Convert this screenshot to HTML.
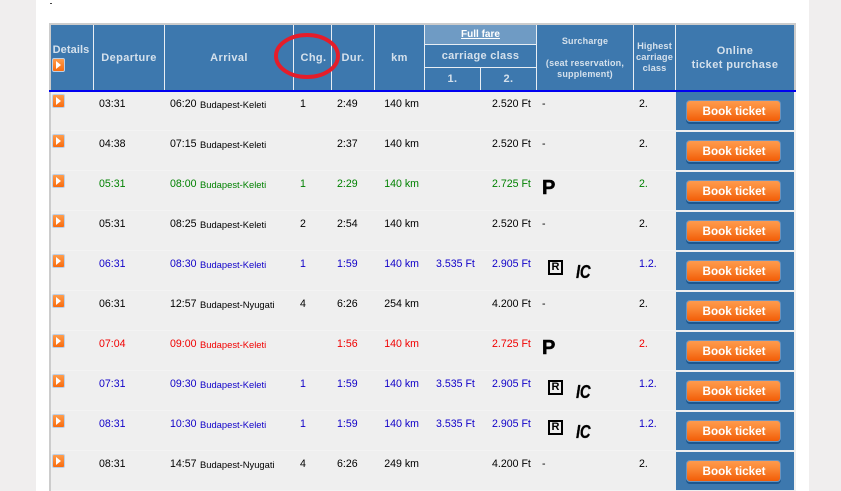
<!DOCTYPE html>
<html><head><meta charset="utf-8">
<style>
html,body{margin:0;padding:0;width:841px;height:491px;overflow:hidden;background:#f0eeee;font-family:"Liberation Sans",Arial,sans-serif}
#w{position:absolute;left:36px;top:0;width:773px;height:491px;background:#fff}
#t{position:absolute;left:49px;top:23px;width:747px;height:468px;background:#ccc}
#h{position:absolute;left:51px;top:25px;width:743px;height:65px;background:#3d78ae}
#bl{position:absolute;left:49px;top:90px;width:747px;height:2px;background:#0000f0}
#b{position:absolute;left:51px;top:92px;width:745px;height:399px;overflow:hidden}
.v{position:absolute;top:25px;width:1px;height:65px;background:#e8eef4}
.th{position:absolute;color:#d5e1ec;font-weight:bold;text-align:center;font-size:11px;line-height:14px;letter-spacing:.4px;white-space:nowrap}
.r{position:absolute;left:0;width:745px;height:40px;background:#efefef;font-size:10.6px;line-height:24px;color:#000;white-space:nowrap}
.r:after{content:"";position:absolute;left:0;top:38px;width:625px;height:1px;background:#f3f3f3}
.r span{position:absolute;top:0}
.g{color:#008000}.u{color:#1000c8}.d{color:#f00000}
.pl{left:1px;top:2px!important;width:11px;height:12px;border:1px solid #bcd0e6;border-radius:2px;background:linear-gradient(#ff9c4c,#f86c10)}
.pl i,.pi i{position:absolute;left:3px;top:2px;width:0;height:0;border-left:5px solid #fff;border-top:4px solid transparent;border-bottom:4px solid transparent}
.dp{left:48px}.ar{left:119px}.st{left:149px;font-size:9.4px;top:1px!important}
.ch{left:249px}.du{left:286px}.km{left:323px;width:45px;text-align:right}
.f1{left:385px}.f2{left:441px}.su{left:491px}.cl{left:588px}
.bc{left:625px;top:0!important;width:118px;height:38px;background:#3d78ae}
.bt{position:absolute;left:10px;top:8px;width:93px;height:20px;border:1px solid #6b93bd;border-radius:4px;background:linear-gradient(#ff9a4c,#fb8a38 35%,#f25c06);box-shadow:0 2px 0 #1c568e;color:#fff;font-weight:bold;font-size:11.7px;line-height:22px;text-align:center;text-indent:1px}
.P{left:491px;top:6px!important;font-size:20px;font-weight:bold;line-height:20px;color:#000;-webkit-text-stroke:.5px #000}
.R{left:497px;top:8px!important;width:11px;height:11px;border:2px solid #000;font-size:11px;font-weight:bold;line-height:11px;text-align:center;color:#000}
.I{left:525px;top:10px!important;font-size:18px;font-weight:bold;font-style:italic;line-height:20px;color:#000;letter-spacing:-.3px;-webkit-text-stroke:.3px #000;transform:scaleX(.82);transform-origin:0 0}
</style></head><body>
<div id="w"></div>
<div style="position:absolute;left:50px;top:3px;width:2px;height:1px;background:#444"></div>
<div id="t"></div>
<div id="h"></div>
<div style="position:absolute;left:425px;top:25px;width:111px;height:19px;background:#6f9bc4"></div>
<div class="v" style="left:93px"></div><div class="v" style="left:164px"></div><div class="v" style="left:293px"></div><div class="v" style="left:331px"></div><div class="v" style="left:374px"></div><div class="v" style="left:424px"></div><div class="v" style="left:536px"></div><div class="v" style="left:633px"></div><div class="v" style="left:675px"></div>
<div style="position:absolute;left:425px;top:44px;width:111px;height:1px;background:#e8eef4"></div>
<div style="position:absolute;left:425px;top:67px;width:111px;height:1px;background:#e8eef4"></div>
<div style="position:absolute;left:480px;top:67px;width:1px;height:23px;background:#e8eef4"></div>

<div class="th" style="left:50px;width:42px;top:43px;letter-spacing:.1px">Details</div>
<div class="pi" style="position:absolute;left:52px;top:58px;width:11px;height:12px;border:1px solid #bcd0e6;border-radius:2px;background:linear-gradient(#ff9c4c,#f86c10)"><i></i></div>
<div class="th" style="left:94px;width:70px;top:51px">Departure</div>
<div class="th" style="left:165px;width:128px;top:51px">Arrival</div>
<div class="th" style="left:295px;width:37px;top:51px">Chg.</div>
<div class="th" style="left:332px;width:42px;top:51px">Dur.</div>
<div class="th" style="left:375px;width:49px;top:51px">km</div>
<div class="th" style="left:425px;width:111px;top:28px;font-size:10px;color:#fff;font-weight:bold;letter-spacing:0;text-decoration:underline">Full fare</div>
<div class="th" style="left:425px;width:111px;top:49px;letter-spacing:.3px">carriage class</div>
<div class="th" style="left:425px;width:55px;top:72px">1.</div>
<div class="th" style="left:481px;width:55px;top:72px">2.</div>
<div class="th" style="left:537px;width:96px;top:36px;font-size:9px;line-height:11px;letter-spacing:.2px">Surcharge<br><br>(seat reservation,<br>supplement)</div>
<div class="th" style="left:634px;width:41px;top:41px;font-size:9.3px;line-height:11px;letter-spacing:.1px">Highest<br>carriage<br>class</div>
<div class="th" style="left:676px;width:118px;top:44px;font-size:11px;line-height:14px">Online<br>ticket purchase</div>
<div id="bl"></div>

<div id="b">
<div class="r" style="top:0"><span class="pl"><i></i></span><span class="dp">03:31</span><span class="ar">06:20</span><span class="st">Budapest-Keleti</span><span class="ch">1</span><span class="du">2:49</span><span class="km">140 km</span><span class="f2">2.520 Ft</span><span class="su">-</span><span class="cl">2.</span><span class="bc"><b class="bt">Book ticket</b></span></div>
<div class="r" style="top:40px"><span class="pl"><i></i></span><span class="dp">04:38</span><span class="ar">07:15</span><span class="st">Budapest-Keleti</span><span class="du">2:37</span><span class="km">140 km</span><span class="f2">2.520 Ft</span><span class="su">-</span><span class="cl">2.</span><span class="bc"><b class="bt">Book ticket</b></span></div>
<div class="r g" style="top:80px"><span class="pl"><i></i></span><span class="dp">05:31</span><span class="ar">08:00</span><span class="st">Budapest-Keleti</span><span class="ch">1</span><span class="du">2:29</span><span class="km">140 km</span><span class="f2">2.725 Ft</span><span class="P">P</span><span class="cl">2.</span><span class="bc"><b class="bt">Book ticket</b></span></div>
<div class="r" style="top:120px"><span class="pl"><i></i></span><span class="dp">05:31</span><span class="ar">08:25</span><span class="st">Budapest-Keleti</span><span class="ch">2</span><span class="du">2:54</span><span class="km">140 km</span><span class="f2">2.520 Ft</span><span class="su">-</span><span class="cl">2.</span><span class="bc"><b class="bt">Book ticket</b></span></div>
<div class="r u" style="top:160px"><span class="pl"><i></i></span><span class="dp">06:31</span><span class="ar">08:30</span><span class="st">Budapest-Keleti</span><span class="ch">1</span><span class="du">1:59</span><span class="km">140 km</span><span class="f1">3.535 Ft</span><span class="f2">2.905 Ft</span><span class="R">R</span><span class="I">IC</span><span class="cl">1.2.</span><span class="bc"><b class="bt">Book ticket</b></span></div>
<div class="r" style="top:200px"><span class="pl"><i></i></span><span class="dp">06:31</span><span class="ar">12:57</span><span class="st">Budapest-Nyugati</span><span class="ch">4</span><span class="du">6:26</span><span class="km">254 km</span><span class="f2">4.200 Ft</span><span class="su">-</span><span class="cl">2.</span><span class="bc"><b class="bt">Book ticket</b></span></div>
<div class="r d" style="top:240px"><span class="pl"><i></i></span><span class="dp">07:04</span><span class="ar">09:00</span><span class="st">Budapest-Keleti</span><span class="du">1:56</span><span class="km">140 km</span><span class="f2">2.725 Ft</span><span class="P">P</span><span class="cl">2.</span><span class="bc"><b class="bt">Book ticket</b></span></div>
<div class="r u" style="top:280px"><span class="pl"><i></i></span><span class="dp">07:31</span><span class="ar">09:30</span><span class="st">Budapest-Keleti</span><span class="ch">1</span><span class="du">1:59</span><span class="km">140 km</span><span class="f1">3.535 Ft</span><span class="f2">2.905 Ft</span><span class="R">R</span><span class="I">IC</span><span class="cl">1.2.</span><span class="bc"><b class="bt">Book ticket</b></span></div>
<div class="r u" style="top:320px"><span class="pl"><i></i></span><span class="dp">08:31</span><span class="ar">10:30</span><span class="st">Budapest-Keleti</span><span class="ch">1</span><span class="du">1:59</span><span class="km">140 km</span><span class="f1">3.535 Ft</span><span class="f2">2.905 Ft</span><span class="R">R</span><span class="I">IC</span><span class="cl">1.2.</span><span class="bc"><b class="bt">Book ticket</b></span></div>
<div class="r" style="top:360px"><span class="pl"><i></i></span><span class="dp">08:31</span><span class="ar">14:57</span><span class="st">Budapest-Nyugati</span><span class="ch">4</span><span class="du">6:26</span><span class="km">249 km</span><span class="f2">4.200 Ft</span><span class="su">-</span><span class="cl">2.</span><span class="bc"><b class="bt">Book ticket</b></span></div>
</div>

<svg style="position:absolute;left:265px;top:25px" width="85" height="60"><ellipse cx="42" cy="31" rx="31" ry="21" fill="none" stroke="#e51d2a" stroke-width="4"/></svg>
</body></html>
